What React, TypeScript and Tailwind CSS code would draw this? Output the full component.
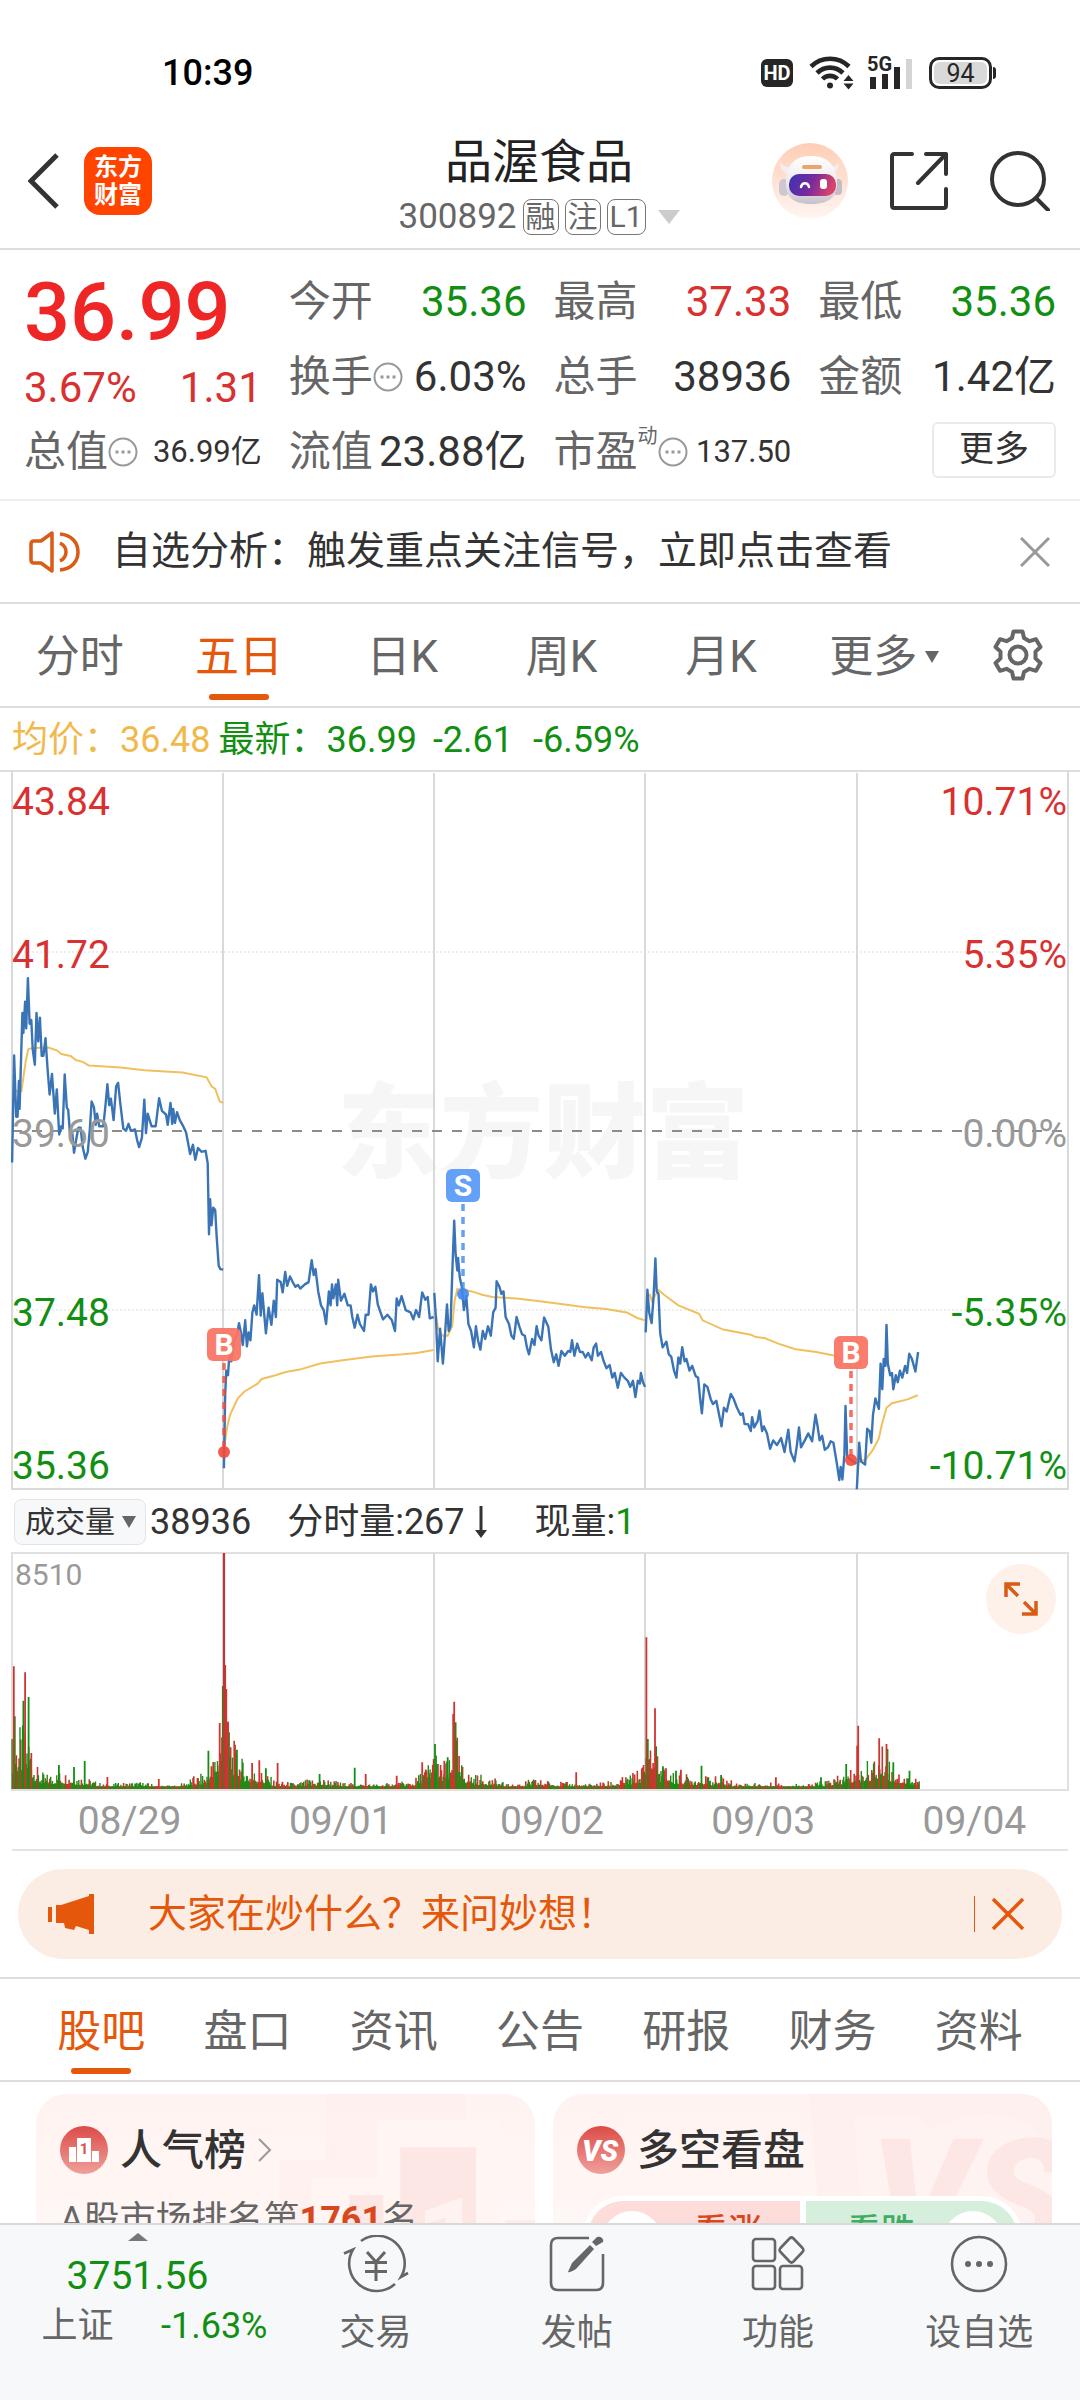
import { FC, ReactNode } from 'react';

type Point = [number, number];

// the plot grid is 3136 units wide, 613 units per trading day
const GX = 1080 / 3136;
const GY = 730 / 1568;

const priceDays: Point[][] = [
  [
    [35, 843], [41, 613], [47, 745], [51, 745], [55, 668], [57, 728], [65, 522], [68, 565], [73, 498], [76, 555], [81, 447], [86, 545], [91, 537], [95, 600], [101, 633],
    [106, 522], [111, 583], [116, 532], [121, 614], [126, 614], [132, 576], [138, 640], [144, 697], [151, 653], [159, 738], [165, 686], [172, 783], [178, 765], [182, 770],
    [188, 654], [194, 725], [198, 730], [204, 790], [210, 780], [215, 822], [222, 790], [228, 768], [234, 768], [240, 810], [248, 835], [255, 820], [261, 770], [266, 712],
    [273, 725], [278, 762], [282, 738], [288, 765], [300, 765], [306, 722], [312, 675], [317, 720], [322, 706], [330, 752], [337, 680], [343, 672], [350, 720], [358, 770],
    [366, 775], [373, 760], [380, 775], [392, 772], [398, 795], [404, 810], [412, 790], [419, 708], [424, 780], [429, 738], [440, 765], [452, 765], [462, 705], [470, 732],
    [482, 740], [487, 762], [495, 715], [500, 760], [503, 728], [508, 758], [514, 735], [522, 752], [532, 765], [540, 778], [546, 800], [552, 825], [560, 805], [567, 837],
    [575, 812], [585, 820], [597, 818], [603, 845], [607, 997], [610, 922], [614, 978], [619, 940], [625, 945], [629, 1000], [635, 1065], [640, 1072], [648, 1073],
  ],
  [
    [650, 1500], [654, 1340], [657, 1290], [662, 1300], [666, 1255], [672, 1270], [680, 1225], [688, 1215], [694, 1188], [700, 1210], [705, 1235], [712, 1182], [717, 1238],
    [722, 1208], [727, 1225], [733, 1165], [738, 1150], [745, 1170], [752, 1085], [757, 1172], [762, 1124], [772, 1210], [780, 1155], [788, 1192], [795, 1140], [801, 1175],
    [805, 1095], [815, 1100], [821, 1122], [828, 1078], [834, 1108], [842, 1088], [850, 1100], [858, 1110], [865, 1106], [872, 1114], [885, 1105], [896, 1100], [905, 1053],
    [911, 1085], [916, 1072], [924, 1120], [932, 1150], [940, 1160], [947, 1190], [955, 1120], [960, 1150], [964, 1105], [968, 1135], [975, 1105], [979, 1150], [982, 1095],
    [990, 1140], [1000, 1125], [1010, 1150], [1018, 1150], [1023, 1175], [1030, 1198], [1038, 1170], [1045, 1190], [1057, 1205], [1062, 1170], [1070, 1170], [1077, 1105],
    [1083, 1120], [1090, 1110], [1097, 1148], [1105, 1165], [1112, 1180], [1125, 1170], [1138, 1182], [1147, 1205], [1152, 1135], [1158, 1150], [1166, 1130], [1178, 1160],
    [1192, 1165], [1200, 1180], [1208, 1160], [1217, 1175], [1226, 1122], [1235, 1138], [1242, 1132], [1248, 1178], [1259, 1175],
  ],
  [
    [1261, 1123], [1266, 1180], [1271, 1270], [1278, 1200], [1286, 1275], [1291, 1225], [1298, 1148], [1303, 1205], [1308, 1195], [1313, 1085], [1319, 968], [1323, 1040],
    [1328, 1075], [1330, 1048], [1335, 1090], [1341, 1110], [1347, 1160], [1354, 1130], [1360, 1190], [1368, 1205], [1376, 1240], [1382, 1195], [1388, 1225], [1395, 1245],
    [1402, 1205], [1409, 1222], [1417, 1195], [1425, 1215], [1432, 1165], [1439, 1155], [1442, 1098], [1450, 1110], [1456, 1125], [1462, 1120], [1468, 1175], [1478, 1190],
    [1485, 1215], [1492, 1222], [1500, 1175], [1508, 1195], [1516, 1212], [1524, 1215], [1530, 1240], [1536, 1255], [1545, 1222], [1552, 1235], [1558, 1195], [1564, 1215],
    [1572, 1225], [1580, 1176], [1592, 1196], [1600, 1245], [1608, 1272], [1615, 1255], [1622, 1280], [1630, 1248], [1640, 1258], [1650, 1248], [1656, 1250], [1661, 1225],
    [1668, 1258], [1676, 1232], [1684, 1250], [1692, 1250], [1700, 1262], [1708, 1252], [1718, 1268], [1724, 1240], [1731, 1232], [1736, 1258], [1745, 1250], [1753, 1270],
    [1761, 1285], [1770, 1278], [1778, 1305], [1785, 1295], [1794, 1327], [1803, 1295], [1813, 1305], [1823, 1312], [1830, 1325], [1838, 1312], [1845, 1347], [1852, 1312],
    [1858, 1318], [1861, 1295], [1867, 1315], [1873, 1325],
  ],
  [
    [1875, 1208], [1880, 1116], [1885, 1165], [1892, 1188], [1898, 1130], [1903, 1049], [1907, 1120], [1912, 1125], [1917, 1210], [1924, 1240], [1935, 1228], [1942, 1255],
    [1949, 1260], [1957, 1290], [1964, 1305], [1970, 1262], [1975, 1275], [1981, 1240], [1988, 1270], [1993, 1265], [2002, 1290], [2010, 1280], [2020, 1302], [2027, 1305],
    [2033, 1350], [2038, 1382], [2045, 1320], [2054, 1325], [2064, 1352], [2070, 1362], [2080, 1355], [2088, 1385], [2095, 1410], [2102, 1370], [2110, 1378], [2117, 1355],
    [2122, 1340], [2130, 1350], [2140, 1370], [2150, 1385], [2157, 1382], [2162, 1405], [2172, 1405], [2180, 1420], [2184, 1390], [2190, 1412], [2200, 1398], [2205, 1376],
    [2213, 1420], [2218, 1410], [2227, 1425], [2236, 1458], [2245, 1440], [2256, 1450], [2268, 1435], [2278, 1465], [2289, 1417], [2296, 1465], [2307, 1485], [2314, 1450],
    [2320, 1412], [2326, 1455], [2337, 1440], [2347, 1425], [2358, 1442], [2368, 1385], [2374, 1410], [2380, 1440], [2387, 1430], [2395, 1460], [2404, 1455], [2412, 1442],
    [2420, 1445], [2430, 1490], [2437, 1525], [2441, 1497], [2446, 1524], [2452, 1470], [2455, 1366], [2460, 1475], [2468, 1480], [2478, 1485], [2487, 1490],
  ],
  [
    [2488, 1545], [2492, 1490], [2495, 1445], [2500, 1485], [2512, 1492], [2518, 1415], [2525, 1420], [2530, 1445], [2535, 1385], [2542, 1350], [2552, 1372], [2557, 1275],
    [2562, 1330], [2566, 1265], [2571, 1280], [2574, 1192], [2578, 1275], [2585, 1300], [2590, 1295], [2594, 1330], [2601, 1300], [2607, 1315], [2613, 1290], [2620, 1305],
    [2628, 1280], [2634, 1295], [2640, 1254], [2648, 1265], [2658, 1292], [2666, 1250],
  ],
];

const averageDays: Point[][] = [
  [[40, 690], [62, 690], [70, 650], [75, 625], [82, 600], [95, 597], [140, 596], [165, 602], [178, 610], [205, 614], [220, 623], [240, 627], [258, 635], [350, 639], [420, 645], [530, 650], [600, 660], [615, 680], [625, 685], [638, 712], [648, 715]],
  [[652, 1450], [660, 1410], [668, 1385], [690, 1350], [710, 1335], [748, 1318], [760, 1308], [800, 1300], [830, 1293], [870, 1288], [930, 1275], [1000, 1267], [1080, 1260], [1170, 1255], [1210, 1252], [1259, 1246]],
  [[1266, 1170], [1272, 1200], [1285, 1215], [1300, 1215], [1313, 1195], [1320, 1140], [1328, 1115], [1350, 1117], [1370, 1120], [1400, 1127], [1430, 1132], [1500, 1135], [1568, 1141], [1640, 1148], [1700, 1154], [1760, 1158], [1820, 1165], [1850, 1177], [1873, 1182]],
  [[1886, 1125], [1893, 1140], [1912, 1117], [1930, 1128], [1970, 1150], [2030, 1168], [2040, 1182], [2100, 1202], [2180, 1213], [2195, 1218], [2220, 1220], [2260, 1232], [2310, 1244], [2370, 1250], [2425, 1258], [2445, 1268], [2460, 1280], [2487, 1283]],
  [[2490, 1488], [2515, 1480], [2535, 1460], [2552, 1435], [2560, 1408], [2574, 1370], [2590, 1360], [2635, 1352], [2665, 1343]],
];

// typical bar height along the five days
const volumeEnvelope: Point[] = [
  [35, 130], [60, 150], [85, 140], [95, 80], [110, 50], [130, 35], [180, 45], [245, 30], [300, 12], [400, 18], [480, 8], [520, 10], [560, 30], [600, 40], [620, 80],
  [640, 150], [650, 260], [665, 150], [690, 90], [720, 50], [760, 45], [800, 20], [860, 15], [900, 25], [950, 25], [1000, 15], [1100, 12], [1200, 20], [1240, 60],
  [1262, 100], [1280, 60], [1310, 70], [1320, 180], [1335, 70], [1360, 40], [1420, 30], [1480, 10], [1550, 25], [1600, 20], [1700, 12], [1780, 20], [1830, 35],
  [1860, 50], [1875, 90], [1885, 130], [1903, 110], [1915, 60], [1960, 40], [2040, 30], [2100, 30], [2140, 15], [2250, 15], [2350, 12], [2430, 30], [2460, 40],
  [2485, 60], [2495, 60], [2540, 70], [2570, 110], [2585, 60], [2620, 40], [2670, 25],
];

const redSpikes: Point[] = [
  [40, 368], [73, 350], [91, 108], [312, 36], [461, 30], [638, 198], [654, 372], [657, 300], [662, 200], [732, 78], [753, 86], [806, 78], [1062, 45], [1152, 40],
  [1226, 80], [1290, 85], [1316, 225], [1319, 262], [1673, 50], [1877, 455], [1902, 242], [1934, 62], [1977, 58], [2253, 35], [2489, 130], [2492, 190], [2553, 152], [2574, 135],
];
const greenSpikes: Point[] = [
  [43, 218], [68, 265], [83, 276], [171, 72], [215, 66], [246, 84], [605, 115], [647, 309], [665, 170], [688, 118], [772, 62], [928, 45], [1030, 64], [1263, 135],
  [1300, 95], [1323, 200], [1881, 150], [1905, 128], [1925, 68], [1963, 55], [2037, 70], [2094, 42], [2384, 35], [2457, 75], [2577, 120], [2594, 80], [2641, 55],
];

const toLine = (points: Point[]) => points.map(([x, y]) => `${(x * GX).toFixed(1)},${(y * GY).toFixed(1)}`).join(' ');

const noise = (i: number) => {
  const v = Math.sin(i * 12.9898) * 43758.5453;
  return v - Math.floor(v);
};

const envelopeAt = (x: number) => {
  const next = volumeEnvelope.findIndex(([ex]) => ex >= x);
  if (next <= 0) return volumeEnvelope[0][1];
  const [x0, y0] = volumeEnvelope[next - 1];
  const [x1, y1] = volumeEnvelope[next];
  return y0 + ((y1 - y0) * (x - x0)) / (x1 - x0);
};

const bar = (x: number, h: number) => `M${(x * GX).toFixed(1)} 237v-${(h / 3).toFixed(1)}`;

const minuteBars = { red: '', green: '' };
for (let i = 0; i < 1034; i++) {
  const x = 35 + i * 2.55;
  const r = noise(i + 1);
  const h = Math.max(8, envelopeAt(x) * (0.35 + 0.95 * r * r));
  minuteBars[noise(i + 5000) > 0.5 ? 'red' : 'green'] += bar(x, h);
}
const spikePath = (points: Point[]) => points.map(([x, h]) => bar(x, h)).join('');

const dayLines = [223, 434, 645, 857];

const MoreDots: FC = () => (
  <svg viewBox="0 0 30 30" className="size-[30px] shrink-0" fill="none" stroke="#999" strokeWidth="2">
    <circle cx="15" cy="15" r="13.5" />
    <path d="M7.5 15h3M13.5 15h3M19.5 15h3" strokeWidth="3" />
  </svg>
);

const StatusBar: FC = () => (
  <div className="flex h-[106px] items-center pt-10 pr-[84px] pl-[162px] text-black">
    <span className="flex-1 text-4xl leading-none font-medium">10:39</span>
    <div className="flex items-center gap-4">
      <span className="flex h-7 w-8 items-center justify-center rounded-md bg-[#262626] text-xl leading-none font-bold text-white">HD</span>
      <div className="flex items-center gap-3">
        <svg viewBox="0 0 46 36" className="h-9 w-[46px]" fill="none" stroke="#262626" strokeWidth="4.6">
          <path d="M2 11.5a27 27 0 0 1 38 0" />
          <path d="M8 18a18.500 18.500 0 0 1 26 0" />
          <path d="M13.500 24a10.500 10.500 0 0 1 15 0" />
          <circle cx="21" cy="30.500" r="3" fill="#262626" stroke="none" />
          <path d="M34.500 26l5-6 5 6zM34.500 28.500l5 6 5-6z" fill="#262626" stroke="none" />
        </svg>
        <div className="relative">
          <svg viewBox="0 0 46 34" className="h-[34px] w-[46px]">
            <path d="M3 21h6v12h-6zM15 18h6v15h-6zM27 11h6v22h-6z" fill="#262626" />
            <path d="M39 3h6v30h-6z" fill="#d4d4d4" />
          </svg>
          <span className="absolute top-0 left-0 text-xl leading-4 font-bold text-[#262626]">5G</span>
        </div>
      </div>
      <div className="flex items-center gap-px">
        <div className="flex h-8 w-[63px] rounded-[10px] border-[3px] border-[#262626] p-0.5">
          <span className="flex flex-1 items-center justify-center rounded-md bg-[#d9d9d9] text-[25px] leading-none text-[#262626]">94</span>
        </div>
        <i className="h-3 w-[3px] rounded-r bg-[#262626]" />
      </div>
    </div>
  </div>
);

const Tag: FC<{ children: ReactNode }> = ({ children }) => (
  <span className="flex h-9 min-w-9 items-center justify-center rounded-lg border border-[#777] px-0.5 text-[30px] leading-none">{children}</span>
);

const RobotAvatar: FC = () => (
  <svg viewBox="0 0 76 76" className="size-[76px]">
    <defs>
      <linearGradient id="halo" x1="0" y1="0" x2="0" y2="1">
        <stop offset="0" stopColor="#ffcdb5" />
        <stop offset="1" stopColor="#fff6f2" />
      </linearGradient>
      <linearGradient id="visor" x1="0" y1="0" x2="1" y2="0.2">
        <stop offset="0" stopColor="#3a33b5" />
        <stop offset="0.55" stopColor="#7a2a9c" />
        <stop offset="1" stopColor="#d8436a" />
      </linearGradient>
      <linearGradient id="helmet" x1="0" y1="0" x2="0" y2="1">
        <stop offset="0" stopColor="#ffffff" />
        <stop offset="0.6" stopColor="#ebe8ec" />
        <stop offset="1" stopColor="#c4c1ca" />
      </linearGradient>
    </defs>
    <circle cx="38" cy="38" r="38" fill="url(#halo)" />
    <path d="M8 19c0 7 3 11 9 12l6-9c-6 4-12 2-15-3zM67 19c0 7-3 11-9 12l-6-9c6 4 12 2 15-3z" fill="#f4eef0" />
    <rect x="7" y="36" width="10" height="17" rx="5" fill="#cdc8d0" />
    <rect x="61" y="36" width="9" height="16" rx="4" fill="#c4bdc6" />
    <path d="M14 40c0-17 8-27 25-27s26 10 26 27c0 15-9 21-26 21s-25-6-25-21z" fill="url(#helmet)" />
    <rect x="17" y="31" width="47" height="22" rx="10" fill="url(#visor)" />
    <rect x="30" y="22" width="20" height="4" rx="2" fill="#e9a56b" />
    <path d="M29 44c1-5 7-5 8 0" fill="none" stroke="#fff" strokeWidth="2.500" strokeLinecap="round" />
    <rect x="48" y="36" width="7" height="10" rx="3" fill="#fff" />
  </svg>
);

const Header: FC = () => (
  <header className="grid h-36 grid-cols-[1fr_auto_1fr] items-center border-b-2 border-[#ddd] pt-2 pr-[30px] pl-7 text-[#333]">
    <div className="flex items-center gap-6">
      <button aria-label="返回">
        <svg viewBox="0 0 32 56" className="h-14 w-8" fill="none" stroke="currentColor" strokeWidth="5">
          <path d="M29 2L3 28l26 26" />
        </svg>
      </button>
      <a href="#home" className="flex size-[68px] flex-col items-center justify-center rounded-2xl bg-[#ff4400] text-2xl leading-7 font-bold text-white">
        <span>东方</span>
        <span>财富</span>
      </a>
    </div>
    <div className="flex flex-col items-center pt-2">
      <h1 className="text-[47px] leading-[64px] text-[#222]">品渥食品</h1>
      <div className="flex items-center gap-1.5 text-[#666]">
        <span className="text-[35px] leading-[46px]">300892</span>
        <Tag>融</Tag>
        <Tag>注</Tag>
        <Tag>L1</Tag>
        <svg viewBox="0 0 22 14" className="ml-1.5 h-3.5 w-[22px]">
          <path d="M0 0h22L11 14z" fill="#ccc" />
        </svg>
      </div>
    </div>
    <div className="flex items-center justify-end gap-[42px]">
      <button aria-label="智能助手">
        <RobotAvatar />
      </button>
      <button aria-label="分享">
        <svg viewBox="0 0 58 58" className="size-[58px]" fill="none" stroke="currentColor" strokeWidth="4" strokeLinecap="round" strokeLinejoin="round">
          <path d="M22 2H4.500Q2 2 2 4.500v49Q2 56 4.500 56h49q2.500 0 2.500-2.500V37" />
          <path d="M36 2h20v20M56 2L28 31" />
        </svg>
      </button>
      <button aria-label="搜索">
        <svg viewBox="0 0 60 60" className="size-[60px]" fill="none" stroke="currentColor" strokeWidth="4" strokeLinecap="round">
          <circle cx="28" cy="28" r="26" />
          <path d="M46 47l12 12" />
        </svg>
      </button>
    </div>
  </header>
);

const Quote: FC<{ label: string; value: string; tone?: string; small?: boolean; dots?: boolean; sup?: string }> = ({ label, value, tone = 'text-[#333]', small, dots, sup }) => (
  <div className="flex h-[75px] items-center justify-between whitespace-nowrap">
    <span className="flex items-center text-[42px] leading-none text-[#666]">
      {label}
      {sup && <sup className="-top-4 text-xl leading-none">{sup}</sup>}
      {dots && <MoreDots />}
    </span>
    <span className={`${small ? 'text-[31px]' : 'text-[42px]'} leading-none ${tone}`}>{value}</span>
  </div>
);

const QuotePanel: FC = () => (
  <section className="grid grid-cols-4 gap-x-[27px] border-b-2 border-[#eee] pt-3.5 pr-6 pb-2.5 pl-6">
    <div>
      <div className="text-[81px] leading-[98px] font-medium text-[#ee2626]">36.99</div>
      <div className="flex justify-between text-[42px] leading-[52px] text-[#d93030]">
        <span>3.67%</span>
        <span>1.31</span>
      </div>
      <Quote label="总值" value="36.99亿" small dots />
    </div>
    <div>
      <Quote label="今开" value="35.36" tone="text-[#128f12]" />
      <Quote label="换手" value="6.03%" dots />
      <Quote label="流值" value="23.88亿" />
    </div>
    <div>
      <Quote label="最高" value="37.33" tone="text-[#d93030]" />
      <Quote label="总手" value="38936" />
      <Quote label="市盈" value="137.50" sup="动" small dots />
    </div>
    <div>
      <Quote label="最低" value="35.36" tone="text-[#128f12]" />
      <Quote label="金额" value="1.42亿" />
      <div className="flex h-[75px] items-center justify-end pb-1">
        <button className="rounded-md border-2 border-[#eaeaea] px-[25px] text-[35px] leading-[52px] text-[#333]">更多</button>
      </div>
    </div>
  </section>
);

const NoticeBar: FC = () => (
  <div className="flex h-[103px] items-center border-b-2 border-[#ddd] pr-[30px] pl-7 text-[#333]">
    <svg viewBox="0 0 54 44" className="h-11 w-[54px]" fill="none" stroke="#d95b16" strokeWidth="3.500">
      <path d="M24 3v38L13 33H6q-3 0-3-3V14q0-3 3-3h7z" strokeLinejoin="round" />
      <path d="M32 13q6 3 6 9t-6 9M32 4c12 1 18 9 18 18s-6 17-18 18" />
    </svg>
    <a href="#signal" className="ml-[30px] flex-1 text-[39px] leading-none whitespace-nowrap">自选分析：触发重点关注信号，立即点击查看</a>
    <button aria-label="关闭提示">
      <svg viewBox="0 0 30 30" className="size-[30px]" stroke="#999" strokeWidth="3">
        <path d="M1 1l28 28M29 1L1 29" />
      </svg>
    </button>
  </div>
);

const periods = ['分时', '五日', '日K', '周K', '月K'];

const PeriodTabs: FC = () => (
  <nav className="flex h-[104px] items-stretch border-b-2 border-[#ddd] text-[44px] leading-none text-[#666]">
    <div className="grid flex-1 grid-cols-6">
      {periods.map((p) => (
        <button key={p} className={`relative flex items-center justify-center pt-1 ${p === '五日' ? 'text-[#e5580b]' : ''} ${p.endsWith('K') ? 'pl-2' : ''}`}>
          {p}
          {p === '五日' && <i className="absolute bottom-1.5 h-1.5 w-[60px] rounded-full bg-[#e5580b]" />}
        </button>
      ))}
      <button className="flex items-center justify-center gap-2 pt-1 pl-4">
        更多
        <svg viewBox="0 0 14 12" className="h-3 w-3.5">
          <path d="M0 0h14L7 12z" fill="#666" />
        </svg>
      </button>
    </div>
    <button className="flex w-[124px] items-center justify-center" aria-label="设置">
      <svg viewBox="0 0 52 52" className="size-[52px]" fill="none" stroke="#666" strokeWidth="4" strokeLinejoin="round">
        <path d="M21.500 2.500h9l1.500 6.500 5.500 3.200 6.500-2 4.500 7.800-5 4.600v6.800l5 4.600-4.500 7.800-6.500-2-5.500 3.200-1.500 6.500h-9L20 43l-5.500-3.200-6.500 2L3.500 34l5-4.600v-6.800l-5-4.600L8 10.200l6.500 2L20 9z" />
        <circle cx="26" cy="26" r="8.500" />
      </svg>
    </button>
  </nav>
);

const leftScale: [string, number, string][] = [
  ['43.84', 45, '#d93030'],
  ['41.72', 198, '#d93030'],
  ['39.60', 377, '#999'],
  ['37.48', 556, '#128f12'],
  ['35.36', 709, '#128f12'],
];
const rightScale = ['10.71%', '5.35%', '0.00%', '-5.35%', '-10.71%'];

const TradeMark: FC<{ x: number; y: number; to: number; kind: 'B' | 'S' }> = ({ x, y, to, kind }) => {
  const color = kind === 'B' ? '#f24a38' : '#3f88f0';
  return (
    <g>
      <path d={`M${x} ${y + 35}V${to}`} stroke={color} strokeWidth="3.500" strokeDasharray="7 6" opacity="0.8" />
      <circle cx={x} cy={to} r="6" fill={color} opacity="0.9" />
      <rect x={x - 17} y={y} width="34" height="33" rx="6" fill={kind === 'B' ? '#f97565' : '#5b9bf8'} opacity="0.95" />
      <text x={x} y={y + 27} textAnchor="middle" fontSize="30" fontWeight="700" fill="#fff">{kind}</text>
    </g>
  );
};

const PriceChart: FC = () => (
  <svg viewBox="0 0 1080 721" className="block w-full" fill="none">
    <text x="543" y="400" textAnchor="middle" fontSize="103" fontWeight="900" fill="#f6f6f6">东方财富</text>
    <path d="M0 1h1080" stroke="#ddd" strokeWidth="2" />
    <path d="M12 1v718h1056V1" stroke="#d9d9d9" strokeWidth="2" />
    {dayLines.map((x) => <path key={x} d={`M${x} 3v716`} stroke="#d9d9d9" strokeWidth="2" />)}
    <path d="M12 182h1056M12 540h1056" stroke="#ddd" strokeDasharray="2 2" />
    <path d="M12 361h1056" stroke="#8c8c8c" strokeWidth="2" strokeDasharray="10 10" />
    {averageDays.map((d, i) => <polyline key={i} points={toLine(d)} stroke="#f0c05e" strokeWidth="2" />)}
    {priceDays.map((d, i) => <polyline key={i} points={toLine(d)} stroke="#3a74b6" strokeWidth="2.400" strokeLinejoin="round" />)}
    {leftScale.map(([label, y, color], i) => (
      <g key={label} fontSize="39" fill={color}>
        <text x="12" y={y}>{label}</text>
        <text x="1067" y={y} textAnchor="end">{rightScale[i]}</text>
      </g>
    ))}
    <TradeMark x={224} y={558} to={682} kind="B" />
    <TradeMark x={463} y={399} to={524} kind="S" />
    <TradeMark x={851} y={566} to={690} kind="B" />
  </svg>
);

const VolumePanel: FC = () => (
  <section>
    <div className="flex h-[61px] items-center gap-1 pl-3.5 text-4xl leading-none whitespace-nowrap text-[#333]">
      <div className="relative">
        <select aria-label="指标" className="h-[46px] w-[132px] appearance-none rounded-lg border border-[#e2e4e8] bg-[#f7f8fa] pl-2.5 text-[30px] leading-none">
          <option>成交量</option>
        </select>
        <svg viewBox="0 0 14 12" className="pointer-events-none absolute top-[17px] right-2.5 h-3 w-3.5">
          <path d="M0 0h14L7 12z" fill="#666" />
        </svg>
      </div>
      <span>38936</span>
      <span className="ml-8">分时量:267</span>
      <svg viewBox="0 0 12 32" className="ml-1.5 h-8 w-3">
        <path d="M4.500 0h3v24H12l-6 8-6-8h4.500z" fill="#333" />
      </svg>
      <span className="ml-11">现量:<b className="font-normal text-[#128f12]">1</b></span>
    </div>
    <div className="relative">
      <svg viewBox="0 0 1080 239" className="block w-full" fill="none">
        <path d="M12 1h1056v237H12z" stroke="#e0e0e0" strokeWidth="2" />
        {dayLines.map((x) => <path key={x} d={`M${x} 1v236`} stroke="#d9d9d9" strokeWidth="2" />)}
        <text x="15" y="33" fontSize="30" fill="#999">8510</text>
        <path d={minuteBars.red} stroke="#c8352a" strokeWidth="1.600" />
        <path d={minuteBars.green} stroke="#1f8a14" strokeWidth="1.400" />
        <path d={spikePath(greenSpikes)} stroke="#128f12" strokeWidth="1.800" />
        <path d={spikePath(redSpikes)} stroke="#cf3530" strokeWidth="1.800" />
        <path d="M224 237V1" stroke="#c23535" strokeWidth="2.200" />
      </svg>
      <button aria-label="全屏" className="absolute top-3 right-6 flex size-[70px] items-center justify-center rounded-full bg-[#fef1ea]">
        <svg viewBox="0 0 34 34" className="size-[34px]" fill="none" stroke="#d95b16" strokeWidth="3.500">
          <path d="M2 15V2h14M2.500 2.500L14 14M32 19v13H18M31.500 31.500L20 20" />
        </svg>
      </button>
    </div>
    <div className="mx-3 border-b-2 border-[#e3e3e3]">
      <div className="-mr-3 grid grid-cols-5 pt-0.5 pl-3 text-center text-[39px] leading-[56px] text-[#999]">
        <span>08/29</span>
        <span>09/01</span>
        <span>09/02</span>
        <span>09/03</span>
        <span>09/04</span>
      </div>
    </div>
  </section>
);

const AskBanner: FC = () => (
  <div className="mx-[18px] my-[18px] flex h-[90px] items-center rounded-full bg-[#fcede4] pr-[38px] pl-[30px] text-[#e5580b]">
    <svg viewBox="0 0 46 40" className="h-10 w-[46px]" fill="currentColor">
      <path d="M0 13h4v15H0zM8 11h5L41 2V0h5v40h-5v-4l-13-4-2 4-9-2-1-5H8z" />
    </svg>
    <a href="#ask" className="ml-[54px] flex-1 text-[39px] leading-none">大家在炒什么？来问妙想！</a>
    <i className="mr-[17px] h-9 w-px bg-[#e5580b]" />
    <button aria-label="关闭">
      <svg viewBox="0 0 32 32" className="size-8" stroke="currentColor" strokeWidth="3.500">
        <path d="M1 1l30 30M31 1L1 31" />
      </svg>
    </button>
  </div>
);

const sections = ['股吧', '盘口', '资讯', '公告', '研报', '财务', '资料'];

const SectionTabs: FC = () => (
  <nav className="grid h-[105px] grid-cols-7 border-y-2 border-[#ddd] px-7 text-[44px] leading-none text-[#666]">
    {sections.map((s) => (
      <button key={s} className={`relative flex items-center justify-center pt-1 ${s === '股吧' ? 'text-[#e5580b]' : ''}`}>
        {s}
        {s === '股吧' && <i className="absolute bottom-1.5 h-1.5 w-[60px] rounded-full bg-[#e5580b]" />}
      </button>
    ))}
  </nav>
);

const BadgeGradient: FC<{ id: string }> = ({ id }) => (
  <linearGradient id={id} x1="0" y1="0" x2="0" y2="1">
    <stop offset="0" stopColor="#dc4b47" />
    <stop offset="1" stopColor="#f0a09b" />
  </linearGradient>
);

const Cards: FC = () => (
  <section className="grid grid-cols-2 gap-[18px] pt-3 pr-7 pl-9">
    <div className="relative h-60 overflow-hidden rounded-[30px] bg-linear-to-b from-[#fff3f1] to-[#fffbf9] px-6 pt-7">
      <svg viewBox="0 0 500 240" className="absolute inset-0 h-full w-full" aria-hidden="true">
        <path d="M244 66h46V0h140v240H244z" fill="#fdeeec" opacity="0.6" />
        <path d="M276 84h66V26h122v214H276z" fill="#fff6f4" />
        <path d="M314 101h34v139h-34zM365 53h76v187h-76z" fill="#fce7e4" />
        <path d="M470 126h30v114h-30z" fill="#fdeeec" />
        <text x="380" y="190" fontSize="120" fontWeight="700" fill="#fff3f1">1</text>
      </svg>
      <div className="relative">
        <h2 className="flex items-center gap-3 text-[42px] leading-[54px] font-medium text-[#333]">
          <svg viewBox="0 0 48 48" className="size-12">
            <defs><BadgeGradient id="rankBadge" /></defs>
            <circle cx="24" cy="24" r="24" fill="url(#rankBadge)" />
            <path d="M9 21h7v15H9zM17 12h14v24H17zM32 25h7v11h-7z" fill="#fff" />
            <text x="24" y="28" textAnchor="middle" fontSize="15" fontWeight="700" fill="#d9534f">1</text>
          </svg>
          <a href="#rank" className="pt-0.5">人气榜</a>
          <svg viewBox="0 0 14 24" className="h-6 w-3.5" fill="none" stroke="#999" strokeWidth="2">
            <path d="M1 1l11 11L1 23" />
          </svg>
        </h2>
        <p className="mt-[18px] text-4xl leading-[48px] whitespace-nowrap text-[#666]">A股市场排名第<b className="text-[#d9481c]">1761</b>名</p>
      </div>
    </div>
    <div className="relative h-60 overflow-hidden rounded-[30px] bg-linear-to-b from-[#fff3f1] to-[#fffbf9] px-6 pt-7">
      <svg viewBox="0 0 500 240" className="absolute inset-0 h-full w-full" aria-hidden="true">
        <path d="M257 0h243v240H275z" fill="#fdeeec" opacity="0.7" />
        <path d="M302 22h62l14 14q80-40 122 20v184H318z" fill="#fff3f1" />
        <text x="318" y="158" fontSize="160" fontWeight="900" fontStyle="italic" fill="#fce7e5">VS</text>
      </svg>
      <div className="relative">
        <h2 className="flex items-center gap-3 text-[42px] leading-[54px] font-medium text-[#333]">
          <svg viewBox="0 0 48 48" className="size-12">
            <defs><BadgeGradient id="vsBadge" /></defs>
            <circle cx="24" cy="24" r="24" fill="url(#vsBadge)" />
            <text x="23" y="35" textAnchor="middle" fontSize="29" fontWeight="900" fontStyle="italic" fill="#fff">VS</text>
          </svg>
          <span className="pt-0.5">多空看盘</span>
        </h2>
        <div className="mx-1.5 mt-[18px] grid h-20 grid-cols-2 gap-1.5 overflow-hidden rounded-full border-[5px] border-white bg-white text-[34px] leading-[60px] font-medium">
          <button className="flex items-start bg-[#fddcd9] pl-3.5 text-[#d9481c]">
            <i className="mt-2.5 mr-8 size-[60px] rounded-full bg-white" />看涨
          </button>
          <button className="flex items-start justify-end bg-[#d6efdc] pr-3.5 text-[#3fae62]">
            看跌<i className="mt-2.5 ml-7 size-[60px] rounded-full bg-white" />
          </button>
        </div>
      </div>
    </div>
  </section>
);

const FooterItem: FC<{ label: string; children: ReactNode }> = ({ label, children }) => (
  <button className="flex flex-1 flex-col items-center pt-2.5 text-4xl leading-[56px] text-[#666]">
    <svg viewBox="0 0 66 58" className="mb-3 h-[58px] w-[66px]" fill="none" stroke="currentColor" strokeWidth="2.600">
      {children}
    </svg>
    {label}
  </button>
);

const Footer: FC = () => (
  <footer className="flex h-[177px] shrink-0 border-t-2 border-[#d9d9d9] bg-[#f7f8fa]">
    <button className="flex w-[275px] flex-col items-center pt-2 text-[#128f12]">
      <svg viewBox="0 0 20 8" className="h-2 w-5">
        <path d="M0 8L10 0l10 8z" fill="#777" />
      </svg>
      <span className="mt-2.5 text-[39px] leading-[50px]">3751.56</span>
      <span className="flex w-[260px] justify-between pl-[34px] text-4xl leading-[50px]">
        <span className="text-[#666]">上证</span>
        <span>-1.63%</span>
      </span>
    </button>
    <FooterItem label="交易">
      <path d="M18 6A27.500 27.500 0 0 1 58 42l7-4M52 49A27.500 27.500 0 0 1 10 14.500l-9 4" />
      <path d="M24 17l9 10 9-10M22 27.500h22M22 36.500h22M33 27v19" strokeWidth="3" />
    </FooterItem>
    <FooterItem label="发帖">
      <path d="M45 3H14Q7 3 7 10v38q0 7 7 7h38q7 0 7-7V19" />
      <path d="M52 11l-4-4 5-5q3-1 5 1t1 4zM50 14l-4-4-18 18-4 9q1 1 8-3z" fill="currentColor" stroke="none" />
    </FooterItem>
    <FooterItem label="功能">
      <rect x="8" y="4" width="22" height="22" rx="3" />
      <rect x="8" y="31" width="22" height="23" rx="3" />
      <rect x="35" y="31" width="22" height="23" rx="3" />
      <path d="M44.500 3.500q2-2 4 0l9 9.500q1.800 2 0 4l-9 9.500q-2 2-4 0l-9-9.500q-1.800-2 0-4z" />
    </FooterItem>
    <FooterItem label="设自选">
      <circle cx="33" cy="29" r="27" />
      <g fill="currentColor" stroke="none">
        <circle cx="22" cy="29" r="3" />
        <circle cx="33" cy="29" r="3" />
        <circle cx="44" cy="29" r="3" />
      </g>
    </FooterItem>
  </footer>
);

const App: FC = () => (
  <div className="flex h-screen flex-col overflow-hidden bg-white font-['Roboto','Noto_Sans_CJK_SC',sans-serif]">
    <main className="min-h-0 flex-1 overflow-hidden">
      <StatusBar />
      <Header />
      <QuotePanel />
      <NoticeBar />
      <PeriodTabs />
      <div className="flex h-[62px] items-center pt-0.5 pl-3 text-4xl leading-none whitespace-nowrap text-[#128f12]">
        <span className="mr-2 text-[#f0b94c]">均价：36.48</span>
        <span className="mr-4">最新：36.99</span>
        <span className="mr-5">-2.61</span>
        <span>-6.59%</span>
      </div>
      <PriceChart />
      <VolumePanel />
      <AskBanner />
      <SectionTabs />
      <Cards />
    </main>
    <Footer />
  </div>
);

export default App;
